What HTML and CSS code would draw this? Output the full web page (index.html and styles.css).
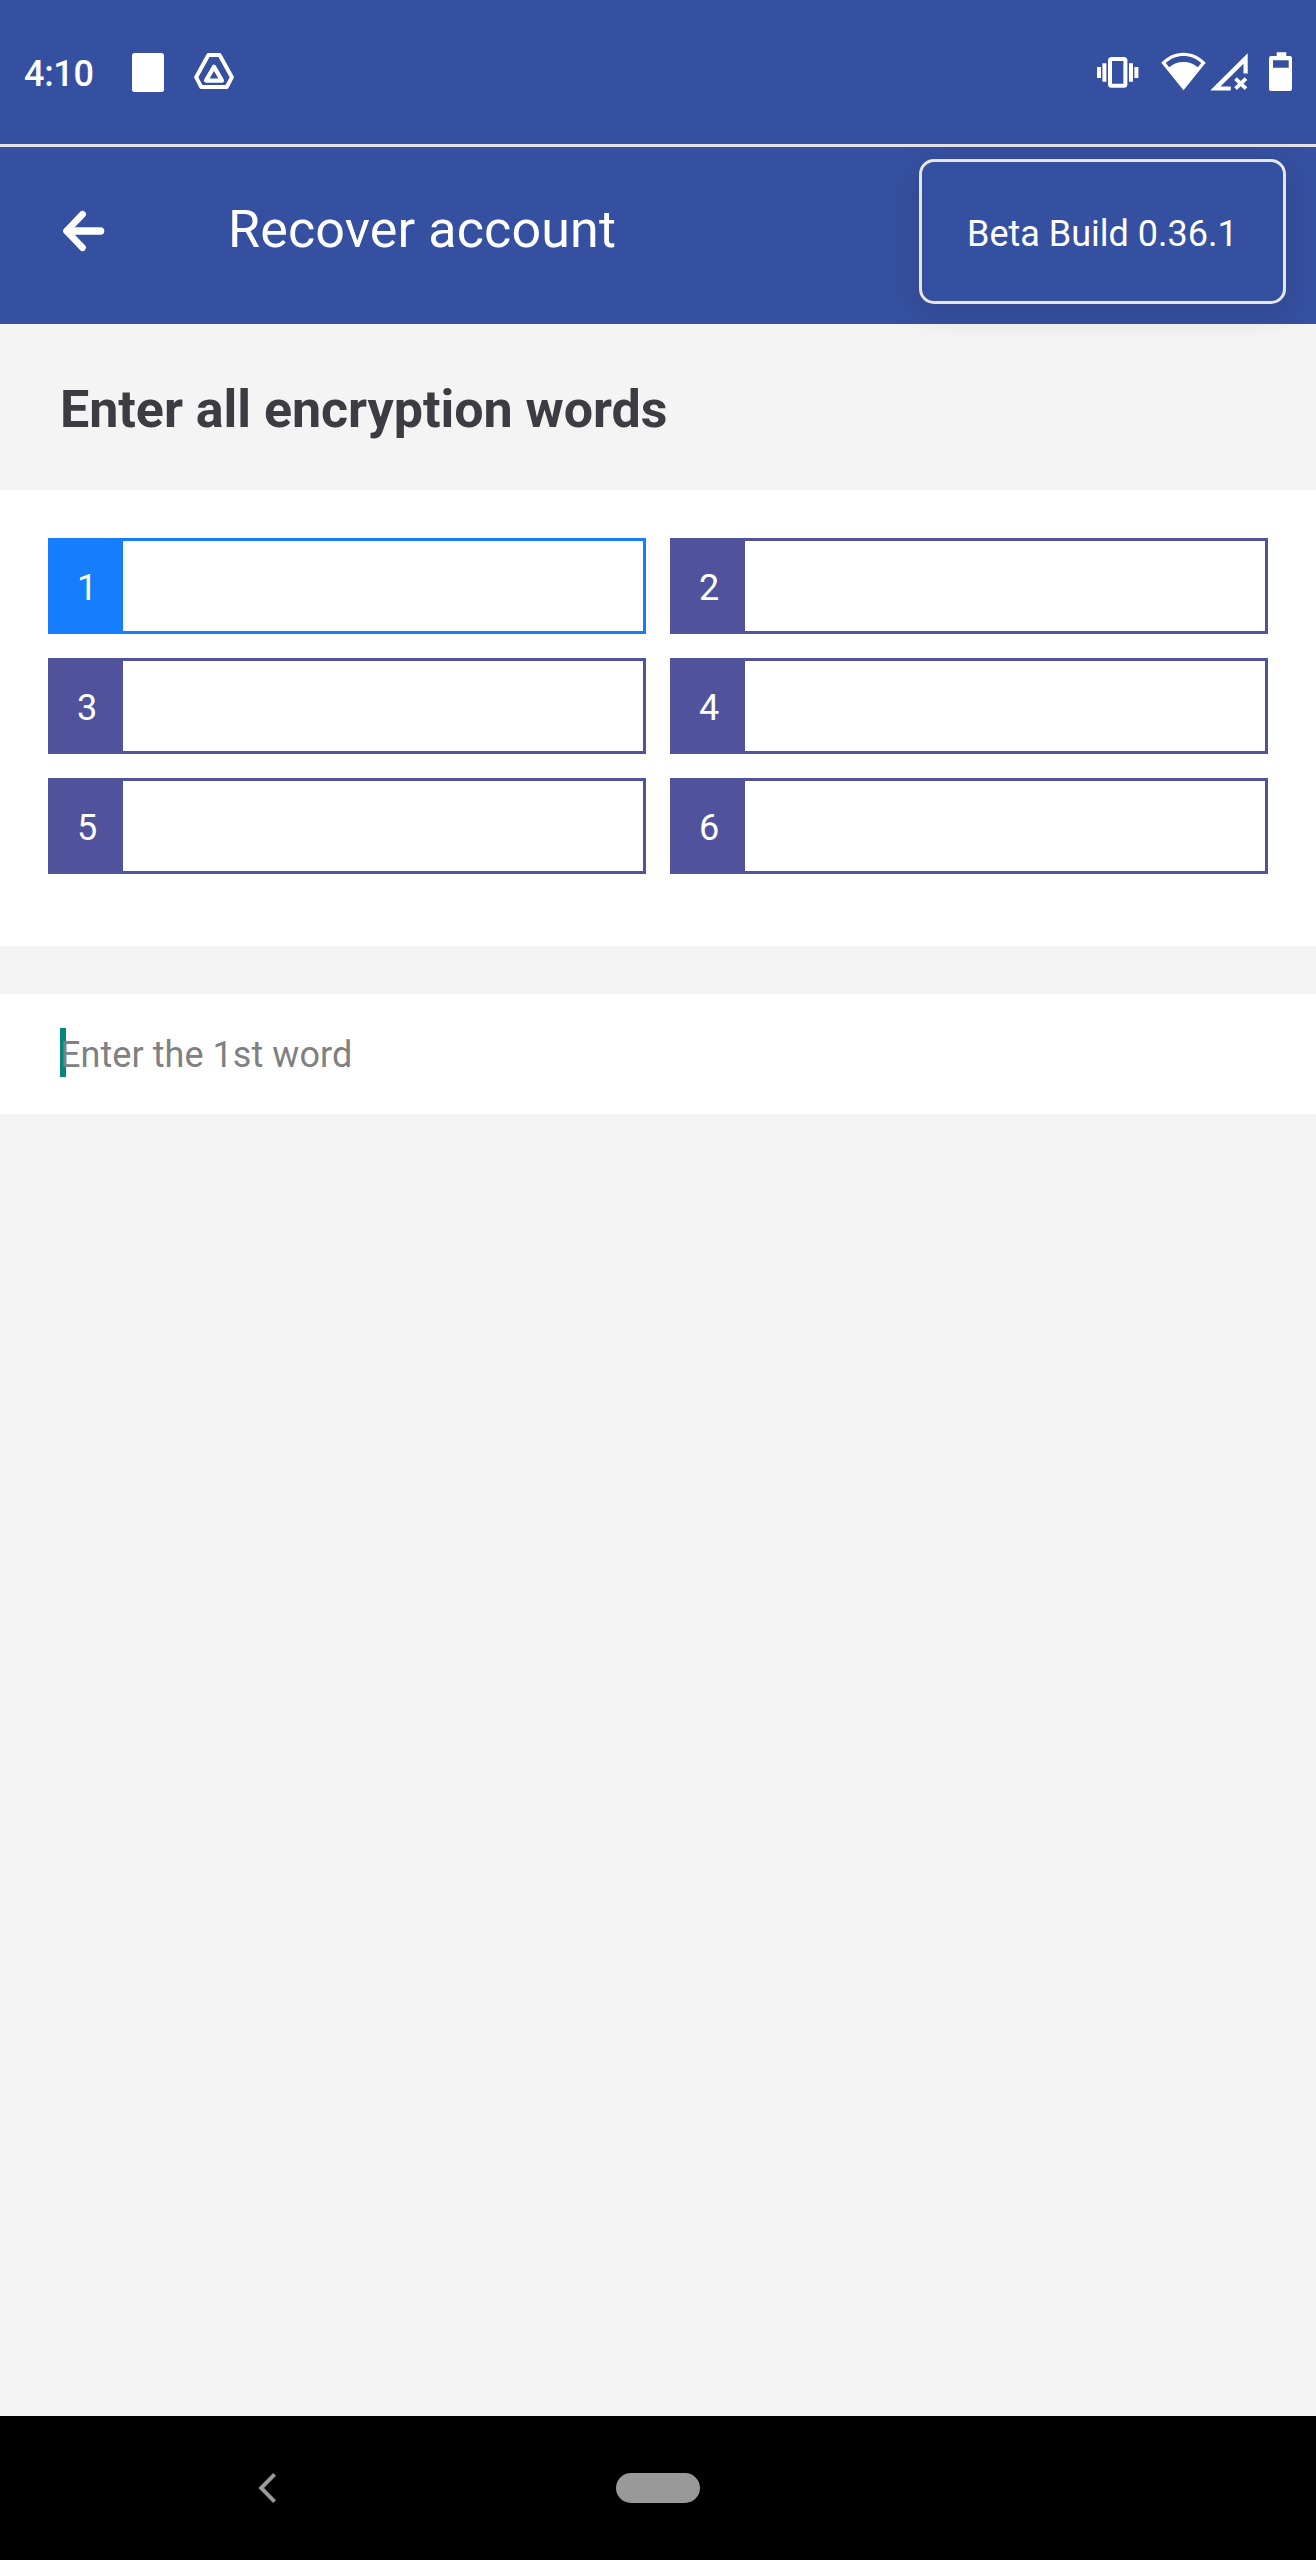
FILE: index.html
```html
<!DOCTYPE html>
<html lang="en">
<head>
<meta charset="utf-8">
<title>Recover account</title>
<link rel="stylesheet" href="styles.css">
</head>
<body>
<div class="screen">
  <div class="status-bar">
    <div class="status-left">
      <span class="clock">4:10</span>
      <svg class="icon-note" width="36" height="48" viewBox="0 0 36 48"><rect x="2" y="5" width="32" height="39" rx="2.5" fill="#fff"/></svg>
      <svg class="icon-drive" width="44" height="48" viewBox="0 0 44 48" fill="none" stroke="#fff" stroke-linejoin="round"><path d="M16.4 7h11.2L39.9 29.2 34.8 39H9.2L4.1 29.2z" stroke-width="3.9"/><path d="M22 18.8 30 32.6H14z" stroke-width="4.2"/></svg>
    </div>
    <div class="status-right">
      <svg width="44" height="48" viewBox="0 0 44 48" fill="#fff"><path d="M1 19h4v11H1zM6.4 15.2h4v18.5h-4zM33 15.2h4v18.5h-4zM38.4 19h4v11h-4z"/><rect x="14" y="11" width="15.4" height="26.8" rx="1.5" fill="none" stroke="#fff" stroke-width="4"/></svg>
      <svg class="icon-wifi" width="46" height="48" viewBox="0 0 46 48"><path d="M22.5 42.2.3 14.8C6.600 8.200 14 4.700 22.500 4.700s15.900 3.500 22.200 10.100zM8.200 19.300C12.300 15.800 17 14 22.500 14s10.200 1.800 14.300 5.300l3.500-4.200C35 10.400 29.200 8 22.500 8S10 10.400 4.700 15.100z" fill="#fff" fill-rule="evenodd"/></svg>
      <svg class="icon-signal" width="40" height="48" viewBox="0 0 40 48"><path d="M.2 42.500 37.700 5.200v20.300H33.500V15.800L10.400 38.500h10.400v4z" fill="#fff"/><path d="m25.500 30.700 10.500 10M36 30.700l-10.500 10" stroke="#fff" stroke-width="3.800"/></svg>
      <svg class="icon-battery" width="24" height="48" viewBox="0 0 24 48"><path d="M7.700 4.200h9.600V8H21q2 0 2 2v31q0 2-2 2H2q-2 0-2-2V10q0-2 2-2h5.700zM4 12.200v7.600h15.700v-7.600z" fill="#fff" fill-rule="evenodd"/></svg>
    </div>
  </div>

  <header class="app-bar">
    <svg class="back" width="44" height="44" viewBox="0 0 44 44" fill="none" stroke="#fff" stroke-width="7.600" stroke-linecap="round" stroke-linejoin="round"><path d="M21.500 5.300 5.500 22l16 16.700" stroke-width="6.800"/><path d="M7 22h32.500"/></svg>
    <h1 class="title">Recover account</h1>
    <div class="build">Beta Build 0.36.1</div>
  </header>

  <h2 class="heading">Enter all encryption words</h2>

  <div class="words">
    <div class="word active"><span class="num">1</span></div>
    <div class="word"><span class="num">2</span></div>
    <div class="word"><span class="num">3</span></div>
    <div class="word"><span class="num">4</span></div>
    <div class="word"><span class="num">5</span></div>
    <div class="word"><span class="num">6</span></div>
  </div>

  <div class="entry"><span class="placeholder">Enter the 1st word</span></div>

  <nav class="nav-bar">
    <svg class="nav-back" width="20" height="30" viewBox="0 0 20 30" fill="none" stroke="#999" stroke-width="4"><path d="M16.600 1.400 3.200 15l13.400 13.600"/></svg>
    <span class="nav-home"></span>
  </nav>
</div>
</body>
</html>
```
FILE: styles.css
```css
* { box-sizing: border-box; }

body {
  margin: 0;
  background: #f4f4f4;
  font-family: Roboto, "Liberation Sans", sans-serif;
  font-size: 36px;
  color: #fff;
}

svg { display: block; flex: none; }

.screen {
  display: flex;
  flex-direction: column;
  width: 1316px;
  height: 2560px;
}

.status-bar {
  display: flex;
  justify-content: space-between;
  align-items: center;
  height: 144px;
  padding: 0 23px 0 24px;
  background: #3650a1;
}

.status-left,
.status-right { display: flex; align-items: center; }

.clock {
  width: 106px;
  padding-top: 3px;
  font-weight: 500;
  letter-spacing: -0.3px;
}

.icon-drive { margin-left: 26px; }
.icon-wifi { margin-left: 21px; }
.icon-signal { margin-left: 3px; }
.icon-battery { margin-left: 19px; }

.app-bar {
  position: relative;
  z-index: 1;
  display: flex;
  align-items: center;
  height: 180px;
  padding: 0 30px 0 61px;
  border-top: 3px solid #e3e3e3;
  background: #3650a1;
}

.back { margin-top: -9px; }

.title {
  margin: 0 auto 12px 123px;
  font-size: 52px;
  font-weight: 400;
  letter-spacing: 0.15px;
  line-height: 60px;
}

.build {
  width: 367px;
  height: 145px;
  margin-bottom: 8px;
  padding: 5px 0 0 45px;
  border: 3px solid #e6e6e6;
  border-radius: 15px;
  background: #3650a1;
  box-shadow: 0 8px 30px rgba(30, 30, 40, 0.17);
  line-height: 135px;
  white-space: nowrap;
}

.heading {
  height: 166px;
  margin: 0;
  padding: 5px 60px 0;
  color: #3d3c43;
  font-size: 52px;
  font-weight: 700;
  letter-spacing: -0.04px;
  line-height: 162px;
}

.words {
  display: grid;
  grid-template-columns: 1fr 1fr;
  grid-auto-rows: 96px;
  gap: 24px;
  height: 456px;
  padding: 48px;
  background: #fff;
}

.word {
  display: flex;
  border: 3px solid #50539b;
}

.num {
  width: 72px;
  padding-top: 4px;
  background: #50539b;
  line-height: 86px;
  text-align: center;
}

.word.active { border-color: #167efc; }
.active .num { background: #167efc; }

.entry {
  display: flex;
  align-items: center;
  height: 120px;
  margin-top: 48px;
  padding: 1px 60px 0;
  background: #fff;
  color: #808080;
}

.placeholder {
  position: relative;
  z-index: 0;
  letter-spacing: 0.06px;
}

/* text caret, drawn behind the placeholder */
.placeholder::before {
  content: "";
  position: absolute;
  z-index: -1;
  left: 0;
  top: -6px;
  width: 6px;
  height: 49px;
  background: #00897b;
}

.nav-bar {
  display: flex;
  align-items: center;
  height: 144px;
  margin-top: auto;
  padding-left: 258px;
  background: #000;
}

.nav-home {
  width: 84px;
  height: 30px;
  margin-left: 338px;
  border-radius: 15px;
  background: #999;
}
```
